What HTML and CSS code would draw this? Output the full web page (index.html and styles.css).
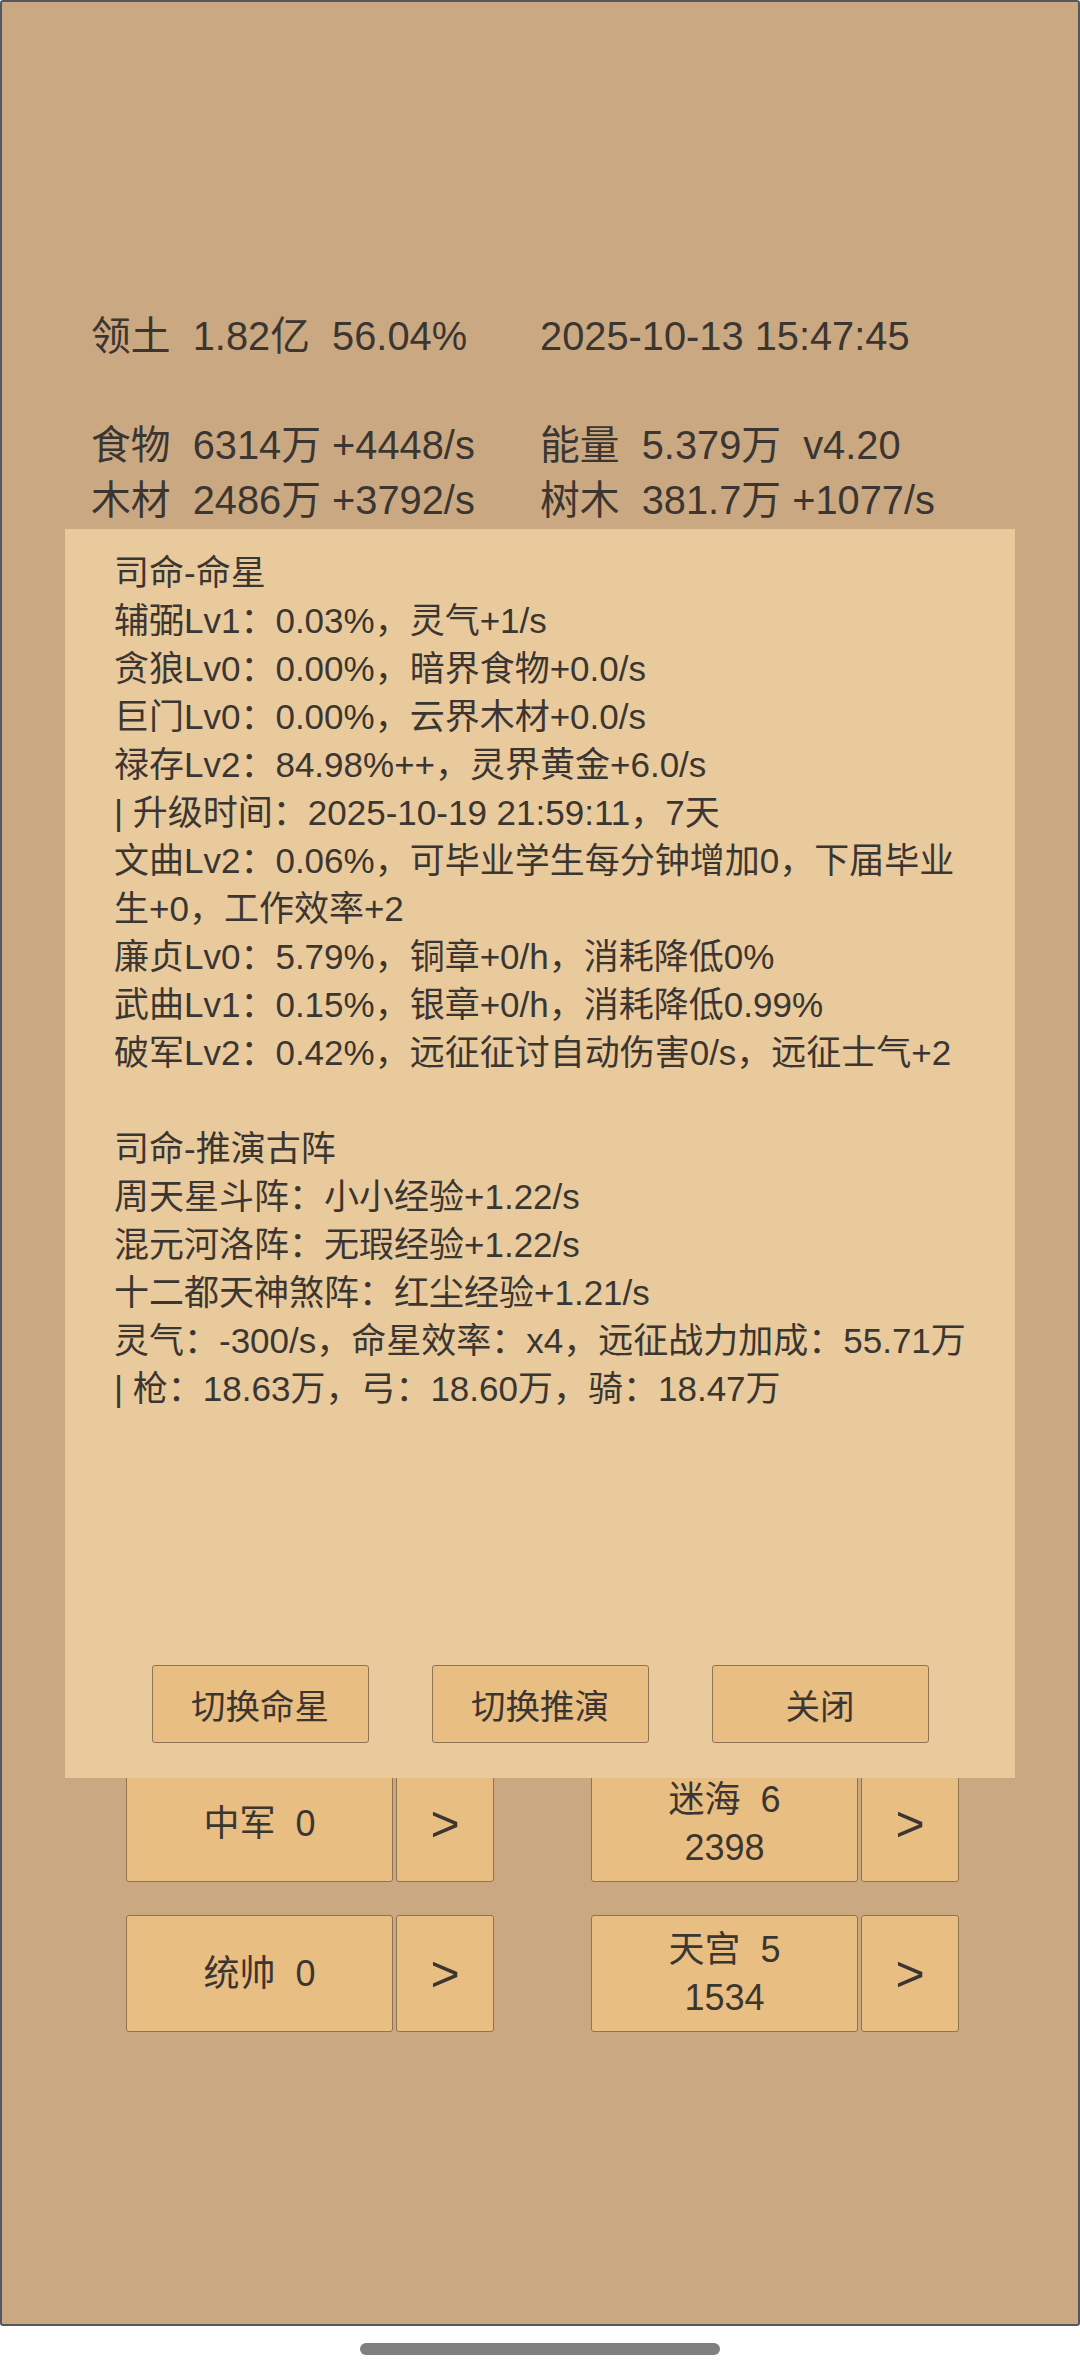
FILE: index.html
```html
<!DOCTYPE html>
<html lang="zh-CN">
<head>
<meta charset="utf-8">
<title>司命</title>
<link rel="stylesheet" href="styles.css">
</head>
<body>
<div class="screen">
  <main class="page">
    <section class="stats">
      <div class="stat">领土  1.82亿  56.04%</div>
      <div class="stat">2025-10-13 15:47:45</div>
      <div class="stat"> </div>
      <div class="stat"> </div>
      <div class="stat">食物  6314万 +4448/s</div>
      <div class="stat">能量  5.379万  v4.20</div>
      <div class="stat">木材  2486万 +3792/s</div>
      <div class="stat">树木  381.7万 +1077/s</div>
    </section>

    <section class="units">
      <div class="unit">
        <button class="unit-main"><span>中军  0</span></button>
        <button class="unit-go">&gt;</button>
      </div>
      <div class="unit">
        <button class="unit-main"><span>迷海  6</span><span>2398</span></button>
        <button class="unit-go">&gt;</button>
      </div>
      <div class="unit">
        <button class="unit-main"><span>统帅  0</span></button>
        <button class="unit-go">&gt;</button>
      </div>
      <div class="unit">
        <button class="unit-main"><span>天宫  5</span><span>1534</span></button>
        <button class="unit-go">&gt;</button>
      </div>
    </section>

    <div class="modal">
      <div class="modal-text">
        <p>司命-命星</p>
        <p>辅弼Lv1：0.03%，灵气+1/s</p>
        <p>贪狼Lv0：0.00%，暗界食物+0.0/s</p>
        <p>巨门Lv0：0.00%，云界木材+0.0/s</p>
        <p>禄存Lv2：84.98%++，灵界黄金+6.0/s</p>
        <p>| 升级时间：2025-10-19 21:59:11，7天</p>
        <p>文曲Lv2：0.06%，可毕业学生每分钟增加0，下届毕业生+0，工作效率+2</p>
        <p>廉贞Lv0：5.79%，铜章+0/h，消耗降低0%</p>
        <p>武曲Lv1：0.15%，银章+0/h，消耗降低0.99%</p>
        <p>破军Lv2：0.42%，远征征讨自动伤害0/s，远征士气+2</p>
        <p class="gap"> </p>
        <p>司命-推演古阵</p>
        <p>周天星斗阵：小小经验+1.22/s</p>
        <p>混元河洛阵：无瑕经验+1.22/s</p>
        <p>十二都天神煞阵：红尘经验+1.21/s</p>
        <p>灵气：-300/s，命星效率：x4，远征战力加成：55.71万</p>
        <p>| 枪：18.63万，弓：18.60万，骑：18.47万</p>
      </div>
      <div class="modal-actions">
        <button class="modal-btn">切换命星</button>
        <button class="modal-btn">切换推演</button>
        <button class="modal-btn">关闭</button>
      </div>
    </div>
  </main>
  <div class="home-area"><div class="home-bar"></div></div>
</div>
</body>
</html>
```

FILE: styles.css
```css
* {
  box-sizing: border-box;
}

html, body {
  margin: 0;
  padding: 0;
  background: #ffffff;
}

body {
  font-family: "Liberation Sans", "Noto Sans CJK SC", sans-serif;
  color: #3b3631;
}

.screen {
  width: 1080px;
  height: 2376px;
  display: flex;
  flex-direction: column;
}

/* game canvas with its thin frame */
.page {
  position: relative;
  height: 2326px;
  background: #caa982;
  border: 2px solid #555862;
  border-radius: 3px;
}

/* resource read-out at the top */
.stats {
  display: grid;
  grid-template-columns: 449px auto;
  padding: 307px 0 0 89px;
  font-size: 39.8px;
  line-height: 54.5px;
}

.stat {
  white-space: pre;
  height: 54.5px;
}

/* unit buttons */
.units {
  display: grid;
  grid-template-columns: repeat(2, 368px);
  column-gap: 97px;
  row-gap: 33px;
  margin-top: 1238px;
  padding-left: 124px;
}

.unit {
  display: flex;
  gap: 3px;
  height: 117px;
}

.unit-main,
.unit-go,
.modal-btn {
  font-family: inherit;
  color: #3b3631;
  background: #e8be83;
  border: 1px solid #8f7352;
  border-radius: 3px;
  padding: 0;
  margin: 0;
}

.unit-main {
  width: 267px;
  height: 100%;
  display: flex;
  flex-direction: column;
  align-items: center;
  justify-content: center;
  font-size: 36px;
  line-height: 48px;
}

.unit-main span {
  white-space: pre;
}

.unit-go {
  width: 98px;
  height: 100%;
  font-size: 50px;
  line-height: 1;
}

/* modal panel laid over the page */
.modal {
  position: absolute;
  left: 63px;
  top: 527px;
  width: 950px;
  height: 1249px;
  background: #e9ca9c;
  display: flex;
  flex-direction: column;
  padding: 20px 40px 35px 49px;
}

.modal-text {
  font-size: 35px;
  line-height: 48px;
}

.modal-text p {
  margin: 0;
  white-space: pre-wrap;
}

.modal-text .gap {
  height: 48px;
}

.modal-actions {
  margin-top: auto;
  margin-left: -49px;
  margin-right: -40px;
  display: flex;
  justify-content: center;
  gap: 63px;
}

.modal-btn {
  width: 217px;
  height: 78px;
  font-size: 34.5px;
}

/* system gesture bar */
.home-area {
  height: 50px;
  display: flex;
  justify-content: center;
  padding-top: 17px;
}

.home-bar {
  width: 360px;
  height: 12px;
  border-radius: 6px;
  background: #808080;
}
```
